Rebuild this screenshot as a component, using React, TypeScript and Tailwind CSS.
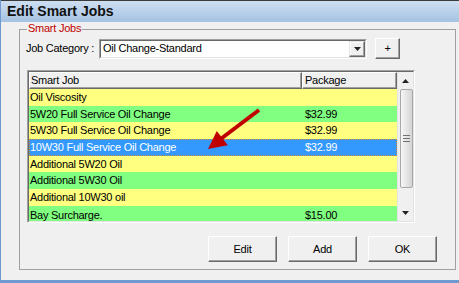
const rows = [
  { name: "Oil Viscosity", price: "", bg: "bg-[#ffff80]", h: "h-[17px]" },
  { name: "5W20 Full Service Oil Change", price: "$32.99", bg: "bg-[#80ff80]", h: "h-[16px]" },
  { name: "5W30 Full Service Oil Change", price: "$32.99", bg: "bg-[#ffff80]", h: "h-[17px]" },
  { name: "10W30 Full Service Oil Change", price: "$32.99", bg: "bg-[#3399ff]", h: "h-[17px]", selected: true },
  { name: "Additional 5W20 Oil", price: "", bg: "bg-[#ffff80]", h: "h-[16px]" },
  { name: "Additional 5W30 Oil", price: "", bg: "bg-[#80ff80]", h: "h-[17px]" },
  { name: "Additional 10W30 oil", price: "", bg: "bg-[#ffff80]", h: "h-[17px]" },
  { name: "Bay Surcharge.", price: "$15.00", bg: "bg-[#80ff80]", h: "h-[19px]" },
];

function Button({ label, className }: { label: string; className: string }) {
  return (
    <div
      className={`${className} flex items-center justify-center border border-t-white border-l-white border-b-[#696969] border-r-[#696969] bg-[#f0f0f0] shadow-[inset_-1px_-1px_0_#a0a0a0]`}
    >
      {label}
    </div>
  );
}

function Tri({ up }: { up?: boolean }) {
  return (
    <svg width="7" height="4" viewBox="0 0 7 4">
      <polygon points={up ? "0,4 3.5,0 7,4" : "0,0 7,0 3.5,4"} fill="#222" />
    </svg>
  );
}

export default function App() {
  return (
    <div className="relative w-[459px] h-[283px] overflow-hidden bg-[#f0f0f0] font-['Liberation_Sans',Arial,sans-serif] text-[11px] tracking-[-0.25px] text-black border-l border-b-[3px] border-l-[#6f9ad0] border-b-[#6f9ad0]">
      <div className="h-[22px] border-t border-[#3b3b3b] bg-gradient-to-b from-[#cddef1] to-[#a6c3e3] flex items-center pl-[6px]">
        <span className="text-[14px] font-bold tracking-normal text-[#111]">Edit Smart Jobs</span>
      </div>

      <div className="relative mt-[7px] ml-[18px] w-[437px] h-[241px] border border-[#a0a0a0]">
        <span className="absolute left-[7px] -top-[8px] px-[1px] bg-[#f0f0f0] text-[#c00000] leading-[13px]">
          Smart Jobs
        </span>

        <div className="mt-[8px] flex items-center pl-[6px]">
          <span className="w-[73px] leading-[13px]">Job Category :</span>
          <div className="w-[268px] h-[20px] border border-t-[#a0a0a0] border-l-[#a0a0a0] border-b-white border-r-white">
            <div className="h-full flex items-center justify-between bg-white border border-t-[#696969] border-l-[#696969] border-b-[#e3e3e3] border-r-[#e3e3e3]">
              <span className="pl-[2px]">Oil Change-Standard</span>
              <div className="w-[16px] h-full flex items-center justify-center bg-[#f0f0f0] border border-t-[#e3e3e3] border-l-[#e3e3e3] border-b-[#696969] border-r-[#696969] shadow-[inset_-1px_-1px_0_#a0a0a0,inset_1px_1px_0_#fff]">
                <Tri />
              </div>
            </div>
          </div>
          <Button label="+" className="ml-[8px] w-[25px] h-[21px]" />
        </div>

        <div className="mt-[11px] ml-[7px] w-[388px] h-[153px] border border-t-[#a0a0a0] border-l-[#a0a0a0] border-b-white border-r-white">
          <div className="h-full flex overflow-hidden border border-t-[#696969] border-l-[#696969] border-b-[#e3e3e3] border-r-[#e3e3e3]">
            <div className="w-[368px] flex flex-col">
              <div className="flex h-[17px] shrink-0">
                <div className="w-[273px] flex items-center pl-[1px] border border-t-white border-l-white border-b-[#696969] border-r-[#696969] shadow-[inset_-1px_-1px_0_#a0a0a0]">
                  Smart Job
                </div>
                <div className="w-[95px] flex items-center pl-[2px] border border-t-white border-l-white border-b-[#696969] border-r-[#696969] shadow-[inset_-1px_-1px_0_#a0a0a0]">
                  Package
                </div>
              </div>
              {rows.map((r) => (
                <div
                  key={r.name}
                  className={`flex shrink-0 items-center ${r.h} ${r.bg} ${
                    r.selected ? "text-white outline outline-1 -outline-offset-1 outline-dotted outline-[#d08a3c]" : ""
                  }`}
                >
                  <span className="w-[273px] pl-[1px]">{r.name}</span>
                  <span className="w-[95px] pl-[3px]">{r.price}</span>
                </div>
              ))}
            </div>

            <div className="w-[16px] flex flex-col bg-[#f0f0f0] border-l border-[#e3e3e3]">
              <div className="h-[17px] shrink-0 flex items-center justify-center">
                <Tri up />
              </div>
              <div className="ml-[2px] w-[13px] h-[99px] shrink-0 rounded-[2px] border border-[#a8a8a8] bg-gradient-to-r from-[#f7f7f7] to-[#d4d4d4] flex flex-col items-center justify-center gap-[2px]">
                <div className="w-[7px] h-px bg-[#707070]" />
                <div className="w-[7px] h-px bg-[#707070]" />
                <div className="w-[7px] h-px bg-[#707070]" />
              </div>
              <div className="mt-auto h-[17px] shrink-0 flex items-center justify-center">
                <Tri />
              </div>
            </div>
          </div>
        </div>

        <div className="mt-[13px] flex justify-end gap-[11px] pr-[18px]">
          <Button label="Edit" className="w-[69px] h-[26px]" />
          <Button label="Add" className="w-[69px] h-[26px]" />
          <Button label="OK" className="w-[69px] h-[26px]" />
        </div>
      </div>

      <svg className="absolute left-0 top-0 pointer-events-none" width="459" height="283">
        <line x1="258" y1="110" x2="219" y2="139.5" stroke="#c00000" strokeWidth="4" />
        <polygon points="207,149 226.8,145.2 215.8,131" fill="#c00000" />
      </svg>
    </div>
  );
}
